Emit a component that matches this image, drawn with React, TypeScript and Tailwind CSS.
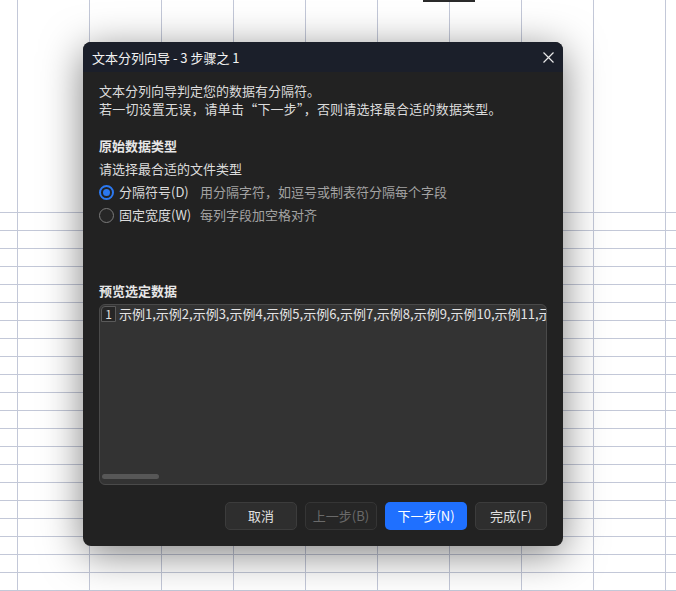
import React from "react";

const font = { fontFamily: '"Noto Sans CJK SC", "Noto Sans", sans-serif' };

function Grid() {
  const cols = 11;
  const rows = 23;
  const cells = [];
  for (let r = 0; r < rows; r++) {
    for (let c = 0; c < cols; c++) {
      const cls =
        (r > 0 ? "border-t border-t-[#c3c8d8] " : "") +
        (c > 0 ? "border-l border-l-[#c3c8d8]" : "");
      cells.push(<div key={r + "-" + c} className={cls} />);
    }
  }
  return (
    <div className="grid h-full w-full grid-cols-[17px_repeat(9,72px)_1fr] grid-rows-[212px_repeat(22,18px)] overflow-hidden bg-white">
      {cells}
    </div>
  );
}

function Radio({ checked }: { checked?: boolean }) {
  return checked ? (
    <span className="flex h-[15px] w-[15px] items-center justify-center rounded-full border-2 border-[#2b78f0]">
      <span className="h-[7px] w-[7px] rounded-full bg-[#2b78f0]" />
    </span>
  ) : (
    <span className="h-[15px] w-[15px] rounded-full border-[1.5px] border-[#7b7b7b] bg-[#262626]" />
  );
}

export default function App() {
  const preview = Array.from({ length: 12 }, (_, i) => "示例" + (i + 1)).join(",");
  return (
    <div className="relative h-[591px] w-[676px] overflow-hidden" style={font}>
      <Grid />
      <div className="absolute left-[423px] top-0 h-[2px] w-[52px] bg-[#2b2b2b]" />
      <div className="absolute left-[83px] top-[42px] flex h-[504px] w-[480px] flex-col overflow-hidden rounded-[8px] bg-[#222222] shadow-[0_8px_40px_rgba(0,0,0,0.5)]">
        <div className="flex h-[30px] shrink-0 items-center justify-between bg-[#1b1f2a] pl-[9px] pr-[9px]">
          <span className="text-[13px] leading-none text-[#f2f2f2]">文本分列向导 - 3 步骤之 1</span>
          <svg width="11" height="11" viewBox="0 0 11 11">
            <path d="M0.5 0.5L10.5 10.5M10.5 0.5L0.5 10.5" stroke="#e8e8e8" strokeWidth="1.2" fill="none" />
          </svg>
        </div>
        <div className="flex flex-1 flex-col px-[16px] pb-[16px] pt-[10px]">
          <div className="text-[13px] leading-[18px] text-[#dcdcdc]">
            <div>文本分列向导判定您的数据有分隔符。</div>
            <div className="tracking-[0.2px]">若一切设置无误，请单击“下一步”，否则请选择最合适的数据类型。</div>
          </div>
          <div className="mt-[19px] text-[13px] font-bold leading-[18px] text-[#e6e6e6]">原始数据类型</div>
          <div className="mt-[5px] text-[13px] leading-[18px] text-[#dcdcdc]">请选择最合适的文件类型</div>
          <div className="mt-[5px] flex h-[18px] items-center text-[13px] leading-[18px]">
            <Radio checked />
            <span className="ml-[5px] w-[81px] text-[#dcdcdc]">分隔符号(D)</span>
            <span className="text-[#a3a3a3]">用分隔字符，如逗号或制表符分隔每个字段</span>
          </div>
          <div className="mt-[5px] flex h-[18px] items-center text-[13px] leading-[18px]">
            <Radio />
            <span className="ml-[5px] w-[81px] text-[#dcdcdc]">固定宽度(W)</span>
            <span className="text-[#a3a3a3]">每列字段加空格对齐</span>
          </div>
          <div className="mt-[58px] text-[13px] font-bold leading-[18px] text-[#e6e6e6]">预览选定数据</div>
          <div className="relative mt-[4px] h-[181px] overflow-hidden rounded-[6px] border border-[#4a4a4a] bg-[#333333]">
            <div className="flex items-center whitespace-nowrap pl-[1px] pt-[1px]">
              <span className="flex h-[16px] w-[15px] shrink-0 items-center justify-center rounded-tl-[4px] border border-[#5a5a5a] bg-[#262626] text-[12px] leading-none text-[#e0e0e0]">1</span>
              <span className="ml-[3px] text-[13px] leading-[16px] text-[#e4e4e4]">{preview}</span>
            </div>
            <div className="absolute bottom-[5px] left-[2px] h-[5px] w-[57px] rounded-full bg-[#575757]" />
          </div>
          <div className="mt-[17px] flex justify-end gap-[8px] text-[13px]">
            <button className="h-[28px] w-[72px] rounded-[5px] border border-[#3c3c3c] bg-[#2e2e2e] text-[#e0e0e0]">取消</button>
            <button className="h-[28px] w-[72px] rounded-[5px] border border-[#353535] bg-[#262626] text-[#6a6a6a]">上一步(B)</button>
            <button className="h-[28px] w-[82px] rounded-[5px] bg-[#1f70ff] text-white">下一步(N)</button>
            <button className="h-[28px] w-[72px] rounded-[5px] border border-[#3c3c3c] bg-[#2e2e2e] text-[#e0e0e0]">完成(F)</button>
          </div>
        </div>
      </div>
    </div>
  );
}
